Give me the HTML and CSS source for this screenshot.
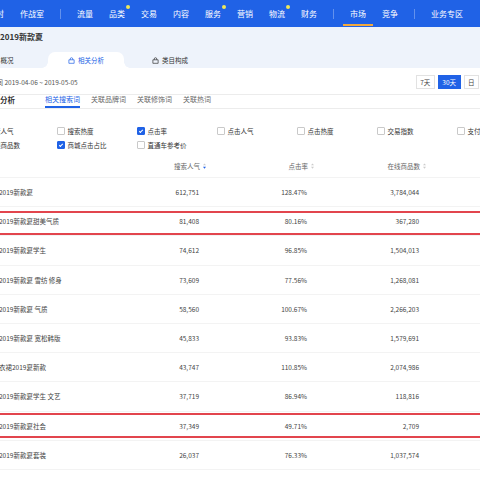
FILE: index.html
```html
<!DOCTYPE html>
<html lang="zh-CN">
  <head>
    <meta charset="UTF-8" />
    <title>市场 - 搜索分析</title>
    <link rel="stylesheet" href="styles.css">
  </head>

  <body>
    <div class="page">
      <header class="nav">
        <span class="nav-item">实时</span>
        <span class="nav-item">作战室</span>
        <span class="nav-sep"></span>
        <span class="nav-item">流量</span>
        <span class="nav-item dot">品类</span>
        <span class="nav-item">交易</span>
        <span class="nav-item">内容</span>
        <span class="nav-item dot">服务</span>
        <span class="nav-item">营销</span>
        <span class="nav-item dot">物流</span>
        <span class="nav-item">财务</span>
        <span class="nav-sep"></span>
        <span class="nav-item active">市场</span>
        <span class="nav-item">竞争</span>
        <span class="nav-sep"></span>
        <span class="nav-item">业务专区</span>
      </header>

      <section class="crumb">
        <div class="crumb-title">2019新款夏</div>
        <div class="tabs">
          <span class="tab">
            <svg viewBox="0 0 8 8"><path d="M1 3.2h6v4H1z M2.6 3.2V2.2a1.4 1.4 0 0 1 2.8 0v1" /></svg>
            概况
          </span>
          <span class="tab active">
            <svg viewBox="0 0 8 8"><path d="M1 3.2h6v4H1z M2.6 3.2V2.2a1.4 1.4 0 0 1 2.8 0v1" /></svg>
            相关分析
          </span>
          <span class="tab">
            <svg viewBox="0 0 8 8"><path d="M1 3.2h6v4H1z M2.6 3.2V2.2a1.4 1.4 0 0 1 2.8 0v1" /></svg>
            类目构成
          </span>
        </div>
      </section>

      <div class="toolbar">
        <span class="date">统计时间 2019-04-06 ~ 2019-05-05</span>
        <div class="range">
          <span class="btn">7天</span>
          <span class="btn active">30天</span>
          <span class="btn">日</span>
          <span class="btn">周</span>
          <span class="btn">月</span>
        </div>
      </div>

      <div class="subnav">
        <span class="subnav-title">搜索分析</span>
        <span class="subtab active">相关搜索词</span>
        <span class="subtab">关联品牌词</span>
        <span class="subtab">关联修饰词</span>
        <span class="subtab">关联热词</span>
      </div>

      <div class="filters">
        <label class="check on"><i></i>搜索人气</label>
        <label class="check"><i></i>搜索热度</label>
        <label class="check on"><i></i>点击率</label>
        <label class="check"><i></i>点击人气</label>
        <label class="check"><i></i>点击热度</label>
        <label class="check"><i></i>交易指数</label>
        <label class="check"><i></i>支付转化率</label>
        <label class="check on"><i></i>在线商品数</label>
        <label class="check on"><i></i>商城点击占比</label>
        <label class="check"><i></i>直通车参考价</label>
      </div>

      <div class="table">
        <div class="row head">
          <span class="name"></span>
          <span class="num">搜索人气 <svg class="sort sorted" viewBox="0 0 4 8"><path d="M2 0.5L4 3H0z" /><path class="down" d="M2 7.5L4 5H0z" /></svg></span>
          <span class="num">点击率 <svg class="sort" viewBox="0 0 4 8"><path d="M2 0.5L4 3H0z" /><path d="M2 7.5L4 5H0z" /></svg></span>
          <span class="num">在线商品数 <svg class="sort" viewBox="0 0 4 8"><path d="M2 0.5L4 3H0z" /><path d="M2 7.5L4 5H0z" /></svg></span>
        </div>
        <div class="row"><span class="name">2019新款夏</span><span class="num">612,751</span><span class="num">128.47%</span><span class="num">3,784,044</span></div>
        <div class="row marked"><span class="name">2019新款夏甜美气质</span><span class="num">81,408</span><span class="num">80.16%</span><span class="num">367,280</span></div>
        <div class="row"><span class="name">2019新款夏学生</span><span class="num">74,612</span><span class="num">96.85%</span><span class="num">1,504,013</span></div>
        <div class="row"><span class="name">2019新款夏 雪纺 修身</span><span class="num">73,609</span><span class="num">77.56%</span><span class="num">1,268,081</span></div>
        <div class="row"><span class="name">2019新款夏 气质</span><span class="num">58,560</span><span class="num">100.67%</span><span class="num">2,266,203</span></div>
        <div class="row"><span class="name">2019新款夏 宽松韩版</span><span class="num">45,833</span><span class="num">93.83%</span><span class="num">1,579,691</span></div>
        <div class="row"><span class="name">衣裙2019夏新款</span><span class="num">43,747</span><span class="num">110.85%</span><span class="num">2,074,986</span></div>
        <div class="row"><span class="name">2019新款夏学生 文艺</span><span class="num">37,719</span><span class="num">86.94%</span><span class="num">118,816</span></div>
        <div class="row marked low"><span class="name">2019新款夏社会</span><span class="num">37,349</span><span class="num">49.71%</span><span class="num">2,709</span></div>
        <div class="row"><span class="name">2019新款夏套装</span><span class="num">26,037</span><span class="num">76.33%</span><span class="num">1,037,574</span></div>
      </div>
    </div>
  </body>
</html>
```

FILE: styles.css
```css
body {
  margin: 0;
  overflow: hidden;
  background-color: #fff;
  color: #333;
  font-family: "Noto Sans CJK SC", "Noto Sans", sans-serif;
}

/* the page is wider than the window and scrolled a little to the right */
.page {
  width: 580px;
  margin-left: -40px;
}

/* top navigation */
.nav {
  height: 27px;
  background-color: #2062e6;
  display: flex;
  align-items: center;
  gap: 16px;
  padding-left: 28px;
}

.nav-item {
  position: relative;
  color: #fff;
  font-size: 8px;
  line-height: 27px;
  white-space: nowrap;
}

.nav-item.dot::after {
  content: "";
  position: absolute;
  top: 5px;
  right: -5px;
  width: 4px;
  height: 4px;
  border-radius: 50%;
  background-color: #eee85a;
}

.nav-item.active::before {
  content: "";
  position: absolute;
  left: -7px;
  right: -7px;
  bottom: 1px;
  height: 2px;
  background-color: #f3a93c;
}

.nav-sep {
  width: 1px;
  height: 10px;
  background-color: rgba(255, 255, 255, 0.3);
}

/* keyword header with tabs */
.crumb {
  background-color: #eef3fb;
  padding-top: 4px;
}

.crumb-title {
  padding-left: 40px;
  font-size: 8px;
  font-weight: bold;
  line-height: 12px;
}

.tabs {
  display: flex;
  margin-top: 9px;
}

.tab {
  position: relative;
  width: 76px;
  margin: 0 4px;
  display: flex;
  align-items: center;
  justify-content: center;
  gap: 3px;
  font-size: 6.5px;
  line-height: 16px;
  color: #333;
}

.tab svg {
  width: 7px;
  height: 7px;
  fill: none;
  stroke: currentColor;
  stroke-width: 0.8;
}

.tab.active {
  background-color: #fff;
  color: #2062e6;
  border-radius: 7px 7px 0 0;
}

/* inverted corners at the foot of the active tab */
.tab.active::before,
.tab.active::after {
  content: "";
  position: absolute;
  bottom: 0;
  width: 6px;
  height: 6px;
}

.tab.active::before {
  left: -6px;
  background: radial-gradient(circle at 0 0, transparent 5.5px, #fff 6px);
}

.tab.active::after {
  right: -6px;
  background: radial-gradient(circle at 100% 0, transparent 5.5px, #fff 6px);
}

/* date range */
.toolbar {
  display: flex;
  align-items: center;
  padding: 7px 24px 5px 17px;
  border-bottom: 1px solid #ececec;
}

.date {
  font-size: 6.5px;
  color: #555;
  line-height: 14px;
}

.range {
  margin-left: auto;
  display: flex;
  gap: 3px;
}

.btn {
  height: 12px;
  padding: 0 3.5px;
  border: 1px solid #e2e2e2;
  font-size: 6.5px;
  line-height: 12px;
  color: #444;
}

.btn.active {
  background-color: #2062e6;
  border-color: #2062e6;
  color: #fff;
}

/* sub tabs */
.subnav {
  display: flex;
  align-items: flex-start;
  gap: 11px;
  padding-left: 25px;
  border-bottom: 1px solid #ececec;
}

.subnav-title {
  font-size: 7.5px;
  font-weight: bold;
  line-height: 9px;
  margin-right: 19px;
}

.subtab {
  font-size: 7px;
  line-height: 8px;
  padding-bottom: 3px;
  color: #666;
  border-bottom: 2px solid transparent;
}

.subtab.active {
  color: #2062e6;
  border-bottom-color: #2062e6;
}

/* indicator checkboxes */
.filters {
  display: grid;
  grid-template-columns: repeat(7, 80px);
  padding: 15px 0 3px 17px;
}

.check {
  display: flex;
  align-items: center;
  gap: 3px;
  height: 14px;
  font-size: 6.5px;
  color: #333;
}

.check i {
  position: relative;
  width: 5.5px;
  height: 5.5px;
  border: 0.75px solid #c9c9c9;
  border-radius: 1px;
}

.check.on i {
  background-color: #2062e6;
  border-color: #2062e6;
}

.check.on i::after {
  content: "";
  position: absolute;
  left: 1.6px;
  top: 0.3px;
  width: 1.4px;
  height: 3px;
  border: solid #fff;
  border-width: 0 1px 1px 0;
  transform: rotate(45deg);
}

/* data table */
.row {
  position: relative;
  display: grid;
  grid-template-columns: 160px 88px 108px 112px;
  align-items: center;
  height: 29.2px;
  border-bottom: 1px solid #f3f3f3;
  box-sizing: border-box;
  font-size: 6.5px;
  color: #444;
}

.row.head {
  height: 23px;
  color: #666;
}

.row .name {
  padding-left: 39px;
  white-space: nowrap;
}

.row .num {
  text-align: right;
  padding-right: 9px;
}

.row.head .num {
  padding-right: 2px;
  display: flex;
  align-items: center;
  justify-content: flex-end;
  gap: 3px;
}

.sort {
  width: 3px;
  height: 6px;
  fill: #ccc;
}

.sort.sorted .down {
  fill: #2062e6;
}

.row.marked::after {
  content: "";
  position: absolute;
  left: 0;
  right: 0;
  top: 4px;
  bottom: 0;
  border-top: 2px solid #e2454d;
  border-bottom: 2px solid #e2454d;
}

.row.marked.low::after {
  top: 1px;
  bottom: 2px;
}
```
